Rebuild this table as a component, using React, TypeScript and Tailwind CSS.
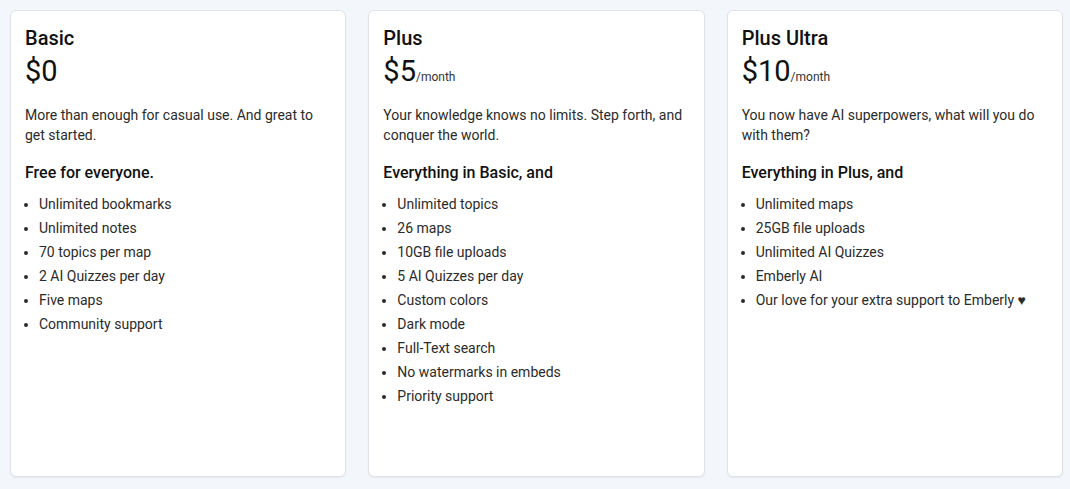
const plans = [
  {
    name: 'Basic',
    price: '$0',
    period: false,
    blurb: ['More than enough for casual use. And great to', 'get started.'],
    heading: 'Free for everyone.',
    features: [
      'Unlimited bookmarks',
      'Unlimited notes',
      '70 topics per map',
      '2 AI Quizzes per day',
      'Five maps',
      'Community support',
    ],
  },
  {
    name: 'Plus',
    price: '$5',
    period: true,
    blurb: ['Your knowledge knows no limits. Step forth, and', 'conquer the world.'],
    heading: 'Everything in Basic, and',
    features: [
      'Unlimited topics',
      '26 maps',
      '10GB file uploads',
      '5 AI Quizzes per day',
      'Custom colors',
      'Dark mode',
      'Full-Text search',
      'No watermarks in embeds',
      'Priority support',
    ],
  },
  {
    name: 'Plus Ultra',
    price: '$10',
    period: true,
    blurb: ['You now have AI superpowers, what will you do', 'with them?'],
    heading: 'Everything in Plus, and',
    features: [
      'Unlimited maps',
      '25GB file uploads',
      'Unlimited AI Quizzes',
      'Emberly AI',
      'Our love for your extra support to Emberly ♥',
    ],
  },
];

export default function App() {
  return (
    <div
      className="w-[1070px] h-[489px] bg-[#f3f6fa] pl-[10px] pr-[7px] pt-[10px] pb-[12px] grid grid-cols-3 gap-[22px] text-[#1f1f1f]"
      style={{ fontFamily: 'Roboto, "Liberation Sans", sans-serif' }}
    >
      {plans.map((plan) => (
        <div
          key={plan.name}
          className="bg-white border border-[#dfe2e7] rounded-[6px] shadow-[0_1px_2px_rgba(0,0,0,0.06)] px-[14px] pt-[13px]"
        >
          <h2 className="text-[20px] leading-[28px] font-medium text-[#111]">{plan.name}</h2>
          <div className="mt-[1px] flex items-baseline">
            <span className="text-[29px] leading-[36px] text-[#111]">{plan.price}</span>
            {plan.period && <span className="text-[12px] text-[#333]">/month</span>}
          </div>
          <p className="mt-[16px] text-[14px] leading-[20px] text-[#2b2b2b]">
            {plan.blurb[0]}
            <br />
            {plan.blurb[1]}
          </p>
          <h3 className="mt-[16px] text-[16px] leading-[24px] font-medium text-[#111]">{plan.heading}</h3>
          <ul className="mt-[7px] list-disc pl-[14px] text-[14px] leading-[24px] text-[#2b2b2b]">
            {plan.features.map((f) => (
              <li key={f}>{f}</li>
            ))}
          </ul>
        </div>
      ))}
    </div>
  );
}
